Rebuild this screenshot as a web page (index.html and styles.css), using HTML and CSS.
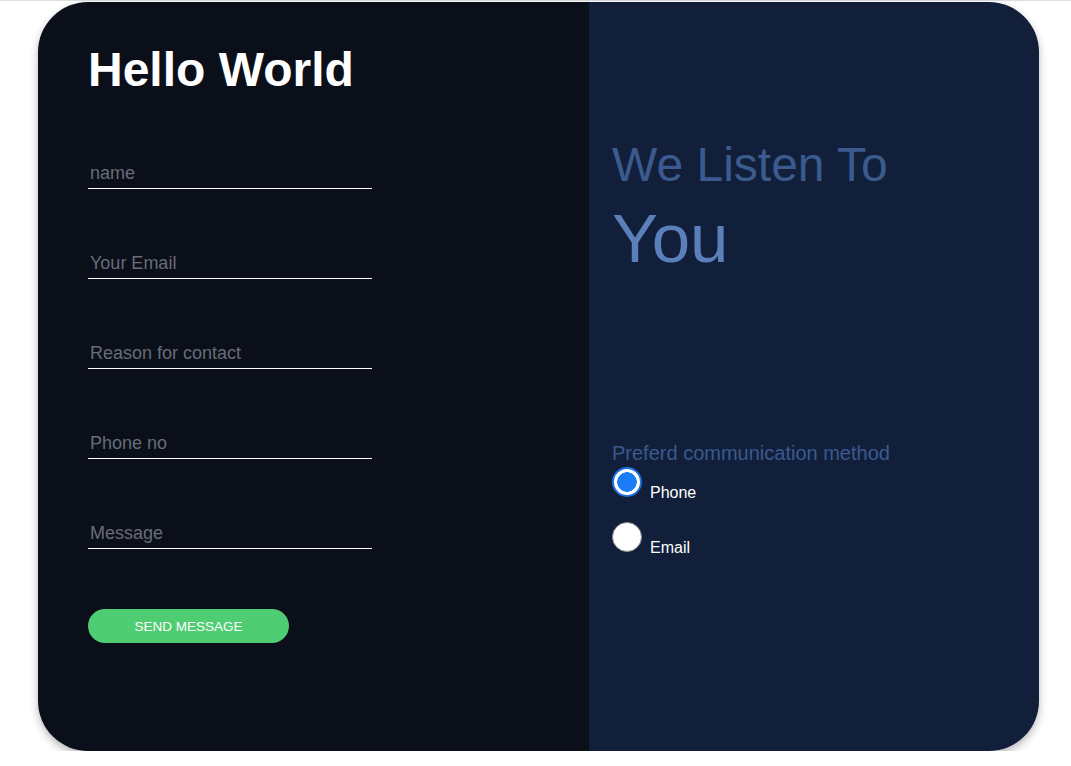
FILE: index.html
```html
<!DOCTYPE html>
<html lang="en">
<head>
<meta charset="utf-8">
<title>Contact</title>
<link rel="stylesheet" href="styles.css">
</head>
<body>
<div class="topline"></div>
<main class="card">
  <section class="left">
    <h1 class="title">Hello World</h1>
    <form class="form">
      <input class="field" type="text" placeholder="name">
      <input class="field" type="email" placeholder="Your Email">
      <input class="field" type="text" placeholder="Reason for contact">
      <input class="field" type="tel" placeholder="Phone no">
      <input class="field" type="text" placeholder="Message">
      <button class="send" type="button">SEND MESSAGE</button>
    </form>
  </section>
  <section class="right">
    <h2 class="listen">We Listen To</h2>
    <div class="you">You</div>
    <p class="pref">Preferd communication method</p>
    <label class="opt"><input class="radio" type="radio" name="m" checked><span>Phone</span></label>
    <label class="opt"><input class="radio" type="radio" name="m"><span>Email</span></label>
  </section>
</main>
</body>
</html>
```

FILE: styles.css
```css
html, body {
  margin: 0;
  padding: 0;
  background: #ffffff;
  font-family: "Liberation Sans", Arial, sans-serif;
}
.topline {
  height: 1px;
  background: #dedede;
}
.card {
  margin: 1px 0 0 38px;
  width: 1001px;
  height: 749px;
  border-radius: 50px;
  overflow: hidden;
  display: flex;
  box-shadow: 0 4px 8px rgba(0, 0, 0, 0.28);
}
.left {
  width: 551px;
  background: #0b0f1a;
  padding: 40px 0 0 50px;
  box-sizing: border-box;
}
.title {
  margin: 0;
  font-size: 48px;
  line-height: 55px;
  font-weight: 700;
  color: #ffffff;
}
.form {
  margin-top: 60px;
  display: flex;
  flex-direction: column;
  align-items: flex-start;
  gap: 58px;
}
.field {
  width: 284px;
  height: 32px;
  box-sizing: border-box;
  background: transparent;
  border: none;
  border-bottom: 1px solid #ffffff;
  padding: 2px 2px 0 2px;
  font-family: "Liberation Sans", Arial, sans-serif;
  font-size: 18px;
  color: #ffffff;
  outline: none;
}
.field::placeholder {
  color: #686d76;
}
.send {
  margin-top: 2px;
  width: 201px;
  height: 34px;
  border: none;
  border-radius: 17px;
  background: #4fcd72;
  color: #ffffff;
  font-family: "Liberation Sans", Arial, sans-serif;
  font-size: 13.5px;
  padding: 0;
}
.right {
  flex: 1;
  background: #111f3b;
  padding: 136px 0 0 23px;
  box-sizing: border-box;
}
.listen {
  margin: 0;
  font-size: 48px;
  line-height: 54px;
  font-weight: 400;
  color: #3b5a8e;
}
.you {
  margin-top: 8px;
  font-size: 69px;
  line-height: 78px;
  color: #5a7fb9;
}
.pref {
  margin: 164px 0 0 0;
  font-size: 20px;
  line-height: 23px;
  color: #3b5a8e;
}
.opt {
  display: flex;
  align-items: flex-end;
  gap: 8px;
  color: #ffffff;
  font-size: 16px;
  line-height: 16px;
  margin-top: 2px;
}
.opt + .opt {
  margin-top: 25px;
}
.opt span {
  margin-bottom: -4px;
}
.radio {
  appearance: none;
  -webkit-appearance: none;
  margin: 0;
  width: 30px;
  height: 30px;
  border-radius: 50%;
  background: #ffffff;
  border: 1px solid #8a8a8a;
  box-sizing: border-box;
}
.radio:checked {
  border: 2px solid #1c72e8;
  background: radial-gradient(circle, #1a7cf6 0 9.5px, #ffffff 10px);
}
```
